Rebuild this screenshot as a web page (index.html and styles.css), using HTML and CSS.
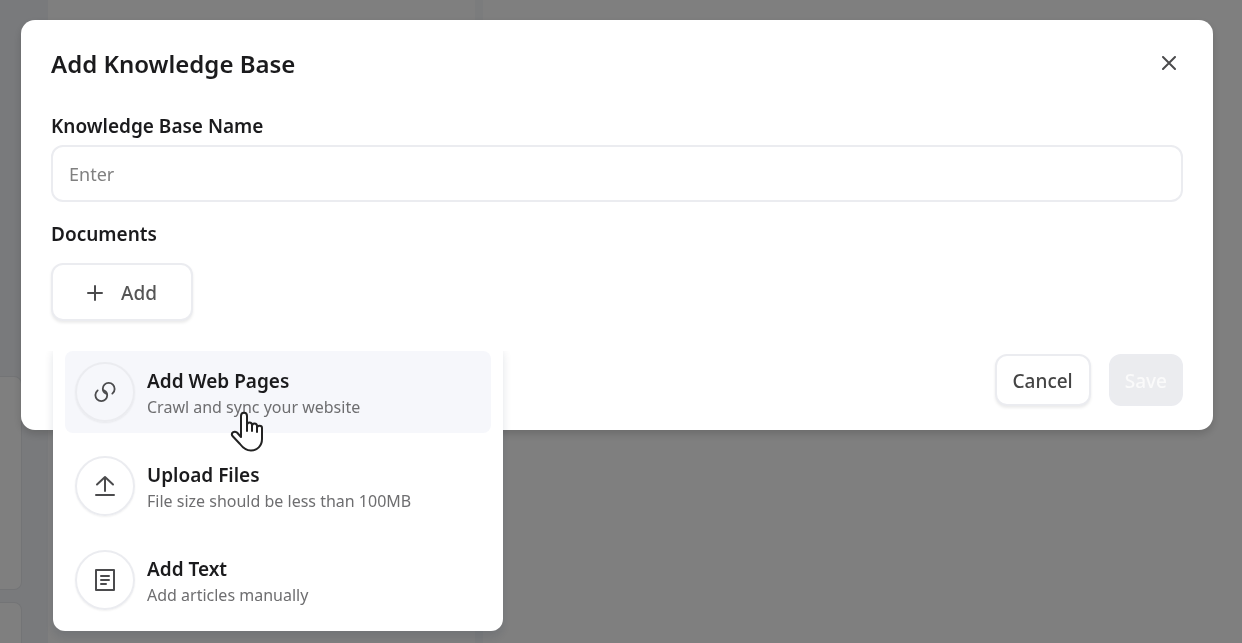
FILE: index.html
```html
<!DOCTYPE html>
<html lang="en">

<head>
    <meta charset="UTF-8">
    <meta name="viewport" content="width=device-width, initial-scale=1.0">
    <title>Add Knowledge Base</title>
    <link rel="stylesheet" href="styles.css">
</head>

<body>
    <div class="page">
        <div class="sidebar">
            <div class="side-card"></div>
            <div class="side-card last"></div>
        </div>
        <div class="panel"></div>
    </div>

    <div class="overlay">
        <form class="modal" role="dialog" aria-labelledby="modalTitle">
            <div class="modal-header">
                <h1 id="modalTitle">Add Knowledge Base</h1>
                <button type="button" class="close" aria-label="Close">
                    <svg width="14" height="14" viewBox="0 0 14 14">
                        <path d="M1 1L13 13M13 1L1 13" />
                    </svg>
                </button>
            </div>

            <label for="kbName">Knowledge Base Name</label>
            <input type="text" id="kbName" placeholder="Enter">

            <h2>Documents</h2>
            <div class="dropdown">
                <button type="button" class="btn add-btn" aria-expanded="true">
                    <svg width="16" height="16" viewBox="0 0 16 16">
                        <path d="M8 1V15M1 8H15" />
                    </svg>
                    Add
                </button>

                <div class="menu">
                    <button type="button" class="menu-item active">
                        <span class="icon">
                            <svg width="22" height="22" viewBox="0 0 24 24">
                                <path d="M4 10.200C2.500 11.500 1.500 13.200 1.500 15.400C1.500 19.200 4.400 22 8 22C11.600 22 14.400 19.200 14.400 15.600C14.400 13.200 13.200 11.400 11.200 10.400" />
                                <path d="M20 13.800C21.500 12.500 22.500 10.800 22.500 8.600C22.500 4.800 19.600 2 16 2C12.400 2 9.600 4.800 9.600 8.400C9.600 10.800 10.800 12.600 12.800 13.600" />
                            </svg>
                        </span>
                        <span class="text">
                            <strong>Add Web Pages</strong>
                            <small>Crawl and sync your website</small>
                        </span>
                    </button>
                    <button type="button" class="menu-item">
                        <span class="icon">
                            <svg width="22" height="22" viewBox="0 0 22 22">
                                <path d="M11 16V2M3 9.500L11 2L19 9.500M2 20H20" />
                            </svg>
                        </span>
                        <span class="text">
                            <strong>Upload Files</strong>
                            <small>File size should be less than 100MB</small>
                        </span>
                    </button>
                    <button type="button" class="menu-item">
                        <span class="icon">
                            <svg width="22" height="22" viewBox="0 0 22 22">
                                <path d="M2 1H20V21H2ZM7 7H15M7 11H15M7 15H12" />
                            </svg>
                        </span>
                        <span class="text">
                            <strong>Add Text</strong>
                            <small>Add articles manually</small>
                        </span>
                    </button>

                    <!-- hand pointer -->
                    <svg class="pointer" width="34" height="42" viewBox="0 0 34 42">
                        <path d="M11 26V5C11 0.500 17 0.500 17 5V17V14C17 10.500 22 10.500 22 14V18V15C22 11.500 27 11.500 27 15V19V17C27 14 32 14 32 17V28C32 35 27 39.500 21 39.500C16 39.500 13 37 10 33L2.500 25C0.500 22 4 19.500 7 21.500Z" />
                        <path d="M17 14V20M22 15V20M27 17V21" />
                    </svg>
                </div>
            </div>

            <div class="modal-footer">
                <button type="button" class="btn cancel">Cancel</button>
                <button type="submit" class="btn save" disabled>Save</button>
            </div>
        </form>
    </div>
</body>

</html>
```

FILE: styles.css
```css
* {
    box-sizing: border-box;
}

body {
    margin: 0;
    min-height: 100vh;
    font-family: "Noto Sans", "Open Sans", sans-serif;
    font-size: 18px;
    color: #1b1b1d;
    overflow: hidden;
}

button,
input {
    font-family: inherit;
    font-size: inherit;
}

svg {
    fill: none;
    stroke: #4b4b4d;
    stroke-width: 2;
    stroke-linecap: round;
    stroke-linejoin: round;
}

/* Page behind the dialog */
.page {
    display: flex;
    height: 100vh;
    background-color: #fff;
}

.sidebar {
    display: flex;
    flex-direction: column;
    gap: 12px;
    width: 48px;
    padding-top: 376px;
    background-color: #f3f5f8;
}

.side-card {
    width: 22px;
    height: 214px;
    background-color: #fff;
    border: 1px solid #e6e8ec;
    border-left: none;
    border-radius: 0 8px 8px 0;
}

.side-card.last {
    flex: 1;
    height: auto;
    border-bottom: none;
    border-bottom-right-radius: 0;
}

.panel {
    width: 435px;
    border-right: 8px solid #f6f8fb;
}

/* Dialog */
.overlay {
    position: fixed;
    inset: 0;
    padding: 20px 29px 0 21px;
    background-color: rgba(0, 0, 0, 0.5);
}

.modal {
    padding: 23px 30px 24px;
    background-color: #fff;
    border-radius: 14px;
    box-shadow: 0 4px 8px rgba(0, 0, 0, 0.16);
}

.modal-header {
    display: flex;
    align-items: center;
    justify-content: space-between;
    height: 40px;
    margin-bottom: 30px;
}

h1 {
    margin: 0;
    font-size: 24px;
    font-weight: 600;
}

.close {
    display: flex;
    padding: 7px;
    background: none;
    border: none;
    cursor: pointer;
}

label,
h2 {
    display: block;
    margin: 0;
    font-size: 19px;
    font-weight: 600;
    line-height: 26px;
}

input[type="text"] {
    display: block;
    width: 100%;
    height: 57px;
    margin: 6px 0 19px;
    padding: 0 16px;
    color: #1b1b1d;
    border: 2px solid #ebecf0;
    border-radius: 12px;
}

input::placeholder {
    color: #808080;
}

.btn {
    padding: 2px 16px 0;
    font-size: 19px;
    font-weight: 500;
    background-color: #fff;
    border: 2px solid #ebecf0;
    border-radius: 12px;
    box-shadow: 0 2px 3px rgba(0, 0, 0, 0.08);
    cursor: pointer;
}

.dropdown {
    position: relative;
    width: 142px;
    margin-top: 16px;
}

.add-btn {
    display: flex;
    align-items: center;
    justify-content: center;
    gap: 18px;
    width: 100%;
    height: 58px;
    color: #555;
}

/* Dropdown menu */
.menu {
    position: absolute;
    top: 78px;
    left: 2px;
    display: flex;
    flex-direction: column;
    gap: 12px;
    width: 450px;
    padding: 10px 12px;
    background-color: #fff;
    border-radius: 12px;
    box-shadow: 0 6px 10px rgba(20, 30, 60, 0.12);
    clip-path: inset(10px -40px -40px -40px);
}

.menu-item {
    display: flex;
    align-items: center;
    gap: 12px;
    height: 82px;
    padding: 0 10px;
    text-align: left;
    color: #1b1b1d;
    background-color: #fff;
    border: none;
    border-radius: 8px;
    cursor: pointer;
}

.menu-item.active {
    background-color: #f6f7fb;
}

.icon {
    display: flex;
    align-items: center;
    justify-content: center;
    width: 60px;
    height: 60px;
    border: 2px solid #ebecf0;
    border-radius: 50%;
    box-shadow: 0 1px 2px rgba(0, 0, 0, 0.06);
}

.text {
    display: flex;
    flex-direction: column;
    padding-top: 4px;
}

.text strong {
    font-size: 19px;
    font-weight: 600;
    line-height: 26px;
}

.text small {
    font-size: 16px;
    line-height: 26px;
    color: #6e6e70;
}

.pointer {
    position: absolute;
    top: 70px;
    left: 177px;
    fill: #fff;
    stroke: #222;
}

/* Footer */
.modal-footer {
    display: flex;
    justify-content: flex-end;
    gap: 18px;
    margin-top: 33px;
}

.cancel,
.save {
    height: 52px;
}

.cancel {
    color: #444;
}

.save {
    padding: 2px 14px 0;
    color: #fafafa;
    background-color: #ebecef;
    box-shadow: none;
}
```
